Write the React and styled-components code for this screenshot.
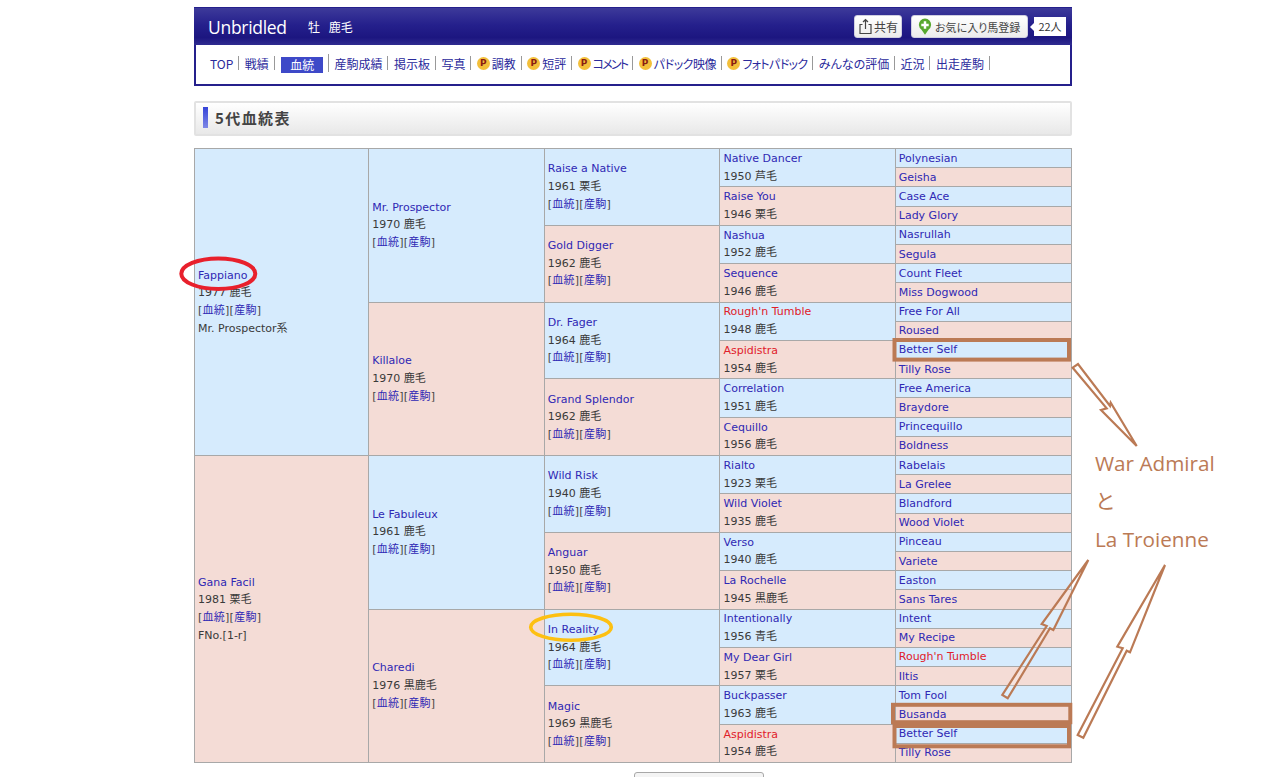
import React from 'react';
import styled, {createGlobalStyle} from 'styled-components';

const GlobalStyle = createGlobalStyle`
  html, body {
    margin: 0;
    height: 777px;
    overflow: hidden;
    background: #fff;
  }
  body {
    font-family: "DejaVu Sans", "Noto Sans CJK JP", sans-serif;
    font-size: 11px;
    color: #3a3a3a;
  }
`;

const Page = styled.div`
  position: relative;
  width: 878px;
  margin: 0 0 0 194px;
  padding-top: 7px;
`;

const Header = styled.header`
  height: 79px;
  box-sizing: border-box;
  border: 2px solid #25208c;
  border-top-width: 1px;
  display: flex;
  flex-direction: column;
`;

const TitleBar = styled.div`
  height: 37px;
  margin: 0 -2px;
  padding: 0 6px 0 14px;
  display: flex;
  align-items: center;
  background: linear-gradient(#3d3a9a 0%, #25208c 45%, #1c1680 80%, #2f2b90 100%);
  color: #fff;
`;

const HorseName = styled.span`
  font-family: "Open Sans", sans-serif;
  font-size: 17.5px;
  letter-spacing: -0.3px;
  width: 100px;
`;

const HorseInfo = styled.span`
  font-family: "Noto Sans CJK JP", sans-serif;
  font-size: 12px;
  word-spacing: 6px;
  flex: 1;
`;

const HeadButton = styled.button`
  height: 23px;
  width: ${({$width}) => $width}px;
  margin-right: ${({$gap}) => $gap}px;
  padding: 0 0 0 ${({$inset}) => $inset}px;
  display: flex;
  align-items: center;
  gap: ${({$space}) => $space}px;
  border: 1px solid #cfcfe0;
  border-radius: 3px;
  background: linear-gradient(#fff, #ececec);
  color: #444;
  font-family: "Noto Sans CJK JP", sans-serif;
  font-size: ${({$size}) => $size}px;
  font-feature-settings: "palt";
  white-space: nowrap;

  & > svg {
    flex-shrink: 0;
  }
`;

const Count = styled.span`
  position: relative;
  width: 32px;
  height: 19px;
  line-height: 19px;
  text-align: center;
  background: #fff;
  color: #333;
  font-family: "Noto Sans CJK JP", sans-serif;
  font-size: 11px;

  &::before {
    content: '';
    position: absolute;
    left: -4px;
    top: 6px;
    border-style: solid;
    border-width: 4px 4px 4px 0;
    border-color: transparent #fff transparent transparent;
  }
`;

const Nav = styled.nav`
  flex: 1;
  display: flex;
  align-items: center;
  padding: 0 0 3px 14px;
  font-family: "Noto Sans CJK JP", sans-serif;
  font-size: 12px;
  font-feature-settings: "palt";
  color: #2a2a9c;
  white-space: nowrap;
`;

const NavItem = styled.span`
  display: flex;
  align-items: center;
  height: ${({$tall}) => ($tall ? 18 : 14)}px;
  padding-right: 4.9px;
  margin-right: 5.5px;
  border-right: 1px solid #999;
  letter-spacing: ${({$track}) => $track ?? 0}px;
`;

const ActiveItem = styled.span`
  display: flex;
  width: 42px;
  height: 16px;
  align-items: center;
  justify-content: center;
  margin: 3px 0 0 1px;
  background: #3e49c8;
  color: #fff;
`;

const Coin = styled.span`
  width: 13px;
  height: 13px;
  margin-right: 2px;
  border-radius: 50%;
  background: #f3bf3a;
  color: #8a1c12;
  font: bold 9px/13px "DejaVu Sans", sans-serif;
  letter-spacing: 0;
  text-align: center;
`;

const Section = styled.h2`
  height: 35px;
  box-sizing: border-box;
  margin: 15px 0 12px;
  padding: 0 0 2px 7px;
  display: flex;
  align-items: center;
  gap: 7px;
  border: 2px solid #e2e2e2;
  border-radius: 2px;
  background: linear-gradient(#fff, #e8e8e8);
  color: #444;
  font-family: "Noto Sans CJK JP", sans-serif;
  font-size: 15px;
  font-weight: bold;
  letter-spacing: 1.4px;

  &::before {
    content: '';
    width: 5px;
    height: 21px;
    background: linear-gradient(#3544d8, #7f88e6);
  }
`;

const Pedigree = styled.div`
  display: grid;
  grid-template-columns: 174.2px 175.6px 175.7px 175.3px 1fr;
  grid-template-rows: repeat(32, 1fr);
  height: 615px;
  box-sizing: border-box;
  border-top: 1px solid #a8a8a8;
  border-left: 1px solid #a8a8a8;
`;

const Cell = styled.div`
  grid-column: ${({$gen}) => $gen + 1};
  grid-row: ${({$row}) => $row + 1} / span ${({$span}) => $span};
  box-sizing: border-box;
  min-height: 0;
  padding: 0 3px;
  display: flex;
  flex-direction: column;
  justify-content: center;
  line-height: ${({$leaf}) => ($leaf ? 17 : 17.7)}px;
  border-right: 1px solid #a8a8a8;
  border-bottom: 1px solid #a8a8a8;
  background: ${({$odd}) => ($odd ? '#f4dcd6' : '#d6ebfd')};
  white-space: nowrap;
`;

const Name = styled.span`
  color: ${({$hot}) => ($hot ? '#e0202a' : '#2f28b4')};
`;

const Links = styled.span`
  color: #444;
  letter-spacing: 0.25px;

  & > b {
    font-weight: normal;
    color: #2f28b4;
  }
`;

const BottomButton = styled.div`
  width: 130px;
  height: 30px;
  box-sizing: border-box;
  margin: 9px 0 0 440px;
  border: 1px solid #a8a8a8;
  border-radius: 3px;
  background: #f4f4f4;
`;

const Marks = styled.svg`
  position: absolute;
  left: -194px;
  top: 0;
  width: 1280px;
  height: 777px;
  pointer-events: none;
`;

const Note = styled.span`
  position: absolute;
  left: 901px;
  top: ${({$top}) => $top}px;
  color: #bb7a55;
  font-family: "Open Sans", "Noto Sans CJK JP", sans-serif;
  font-size: 20.7px;
  line-height: 30px;
  white-space: nowrap;
`;

const gen1 = [
  ['Fappiano', '1977 鹿毛', 'Mr. Prospector系'],
  ['Gana Facil', '1981 栗毛', 'FNo.[1-r]'],
];
const gen2 = [
  ['Mr. Prospector', '1970 鹿毛'], ['Killaloe', '1970 鹿毛'],
  ['Le Fabuleux', '1961 鹿毛'], ['Charedi', '1976 黒鹿毛'],
];
const gen3 = [
  ['Raise a Native', '1961 栗毛'], ['Gold Digger', '1962 鹿毛'],
  ['Dr. Fager', '1964 鹿毛'], ['Grand Splendor', '1962 鹿毛'],
  ['Wild Risk', '1940 鹿毛'], ['Anguar', '1950 鹿毛'],
  ['In Reality', '1964 鹿毛'], ['Magic', '1969 黒鹿毛'],
];
const gen4 = [
  ['Native Dancer', '1950 芦毛'], ['Raise You', '1946 栗毛'],
  ['Nashua', '1952 鹿毛'], ['Sequence', '1946 鹿毛'],
  ["Rough'n Tumble", '1948 鹿毛'], ['Aspidistra', '1954 鹿毛'],
  ['Correlation', '1951 鹿毛'], ['Cequillo', '1956 鹿毛'],
  ['Rialto', '1923 栗毛'], ['Wild Violet', '1935 鹿毛'],
  ['Verso', '1940 鹿毛'], ['La Rochelle', '1945 黒鹿毛'],
  ['Intentionally', '1956 青毛'], ['My Dear Girl', '1957 栗毛'],
  ['Buckpasser', '1963 鹿毛'], ['Aspidistra', '1954 鹿毛'],
];
const gen5 = [
  'Polynesian', 'Geisha', 'Case Ace', 'Lady Glory', 'Nasrullah', 'Segula', 'Count Fleet', 'Miss Dogwood',
  'Free For All', 'Roused', 'Better Self', 'Tilly Rose', 'Free America', 'Braydore', 'Princequillo', 'Boldness',
  'Rabelais', 'La Grelee', 'Blandford', 'Wood Violet', 'Pinceau', 'Variete', 'Easton', 'Sans Tares',
  'Intent', 'My Recipe', "Rough'n Tumble", 'Iltis', 'Tom Fool', 'Busanda', 'Better Self', 'Tilly Rose',
].map((name) => [name]);

const generations = [gen1, gen2, gen3, gen4, gen5];
const isHot = (name) => name === "Rough'n Tumble" || name === 'Aspidistra';

const navItems = [
  {label: '産駒成績'}, {label: '掲示板'}, {label: '写真'},
  {label: '調教', paid: true}, {label: '短評', paid: true}, {label: 'コメント', paid: true, track: -1.8},
  {label: 'パドック映像', paid: true, track: -0.5}, {label: 'フォトパドック', paid: true, track: -0.7},
  {label: 'みんなの評価'}, {label: '近況'}, {label: '出走産駒'},
];

const ShareIcon = () => (
  <svg width="13" height="17" viewBox="0 0 13 17" fill="none" stroke="#444" strokeWidth="1.2">
    <path d="M3.5 6.5H1V15.5H12V6.5H9.5M6.5 11V1.5M4 4L6.5 1.5L9 4" />
  </svg>
);

const PinIcon = () => (
  <svg width="14" height="18" viewBox="0 0 17 20">
    <path d="M8.5 19.5L4 13A7.4 7.4 0 1 1 13 13Z" fill="#58a82e" />
    <path d="M7 3H10V6H13V9H10V12H7V9H4V6H7Z" fill="#fff" />
  </svg>
);

const Arrow = ({points}) => (
  <polygon points={points} fill="#fff" fillOpacity="0.2" stroke="#bb7a55" strokeWidth="2.2" />
);

const App = () => (
  <Page>
    <GlobalStyle />
    <Header>
      <TitleBar>
        <HorseName>Unbridled</HorseName>
        <HorseInfo>牡 鹿毛</HorseInfo>
        <HeadButton $width={48} $gap={9} $inset={4} $space={2} $size={12}><ShareIcon />共有</HeadButton>
        <HeadButton $width={117} $gap={6} $inset={6} $space={3} $size={11}><PinIcon />お気に入り馬登録</HeadButton>
        <Count>22人</Count>
      </TitleBar>
      <Nav>
        <NavItem>TOP</NavItem>
        <NavItem>戦績</NavItem>
        <NavItem $tall><ActiveItem>血統</ActiveItem></NavItem>
        {navItems.map(({label, paid, track}) => (
          <NavItem key={label} $track={track}>
            {paid && <Coin>P</Coin>}
            {label}
          </NavItem>
        ))}
      </Nav>
    </Header>
    <Section>5代血統表</Section>
    <Pedigree>
      {generations.map((horses, gen) =>
        horses.map(([name, born, extra], i) => {
          const span = 32 / horses.length;

          return (
            <Cell key={`${gen}-${i}`} $gen={gen} $row={i * span} $span={span} $odd={i % 2 === 1} $leaf={gen === 4}>
              <Name $hot={isHot(name)}>{name}</Name>
              {born && <span>{born}</span>}
              {gen < 3 && <Links>[<b>血統</b>][<b>産駒</b>]</Links>}
              {extra && <span>{extra}</span>}
            </Cell>
          );
        })
      )}
    </Pedigree>
    <BottomButton />
    <Marks viewBox="0 0 1280 777">
      <ellipse cx="218.3" cy="273.7" rx="37" ry="15.3" fill="none" stroke="#e8202c" strokeWidth="4" />
      <ellipse cx="571" cy="627.2" rx="40.3" ry="13" fill="none" stroke="#fdc012" strokeWidth="3.6" />
      <g fill="none" stroke="#bb7a55" strokeWidth="4">
        <rect x="894.5" y="340" width="174.5" height="19.6" />
        <rect x="893" y="704.8" width="177.3" height="17.4" />
        <rect x="894.5" y="726" width="174.5" height="20.3" />
      </g>
      <Arrow points="1072.7,367.7 1106.7,408.3 1101,410 1136.7,446 1110.7,402.7 1110,406 1078,364" />
      <Arrow points="1088.3,560 1041.7,624 1046.7,626 1002.3,695 1007.7,698.3 1050,628.3 1053.3,630" />
      <Arrow points="1165,565 1117.3,646.7 1122.7,648.3 1077.7,735 1083.3,737.7 1126.7,650.7 1130,652.3" />
    </Marks>
    <Note $top={448}>War Admiral</Note>
    <Note $top={486}>と</Note>
    <Note $top={524}>La Troienne</Note>
  </Page>
);

export default App;
